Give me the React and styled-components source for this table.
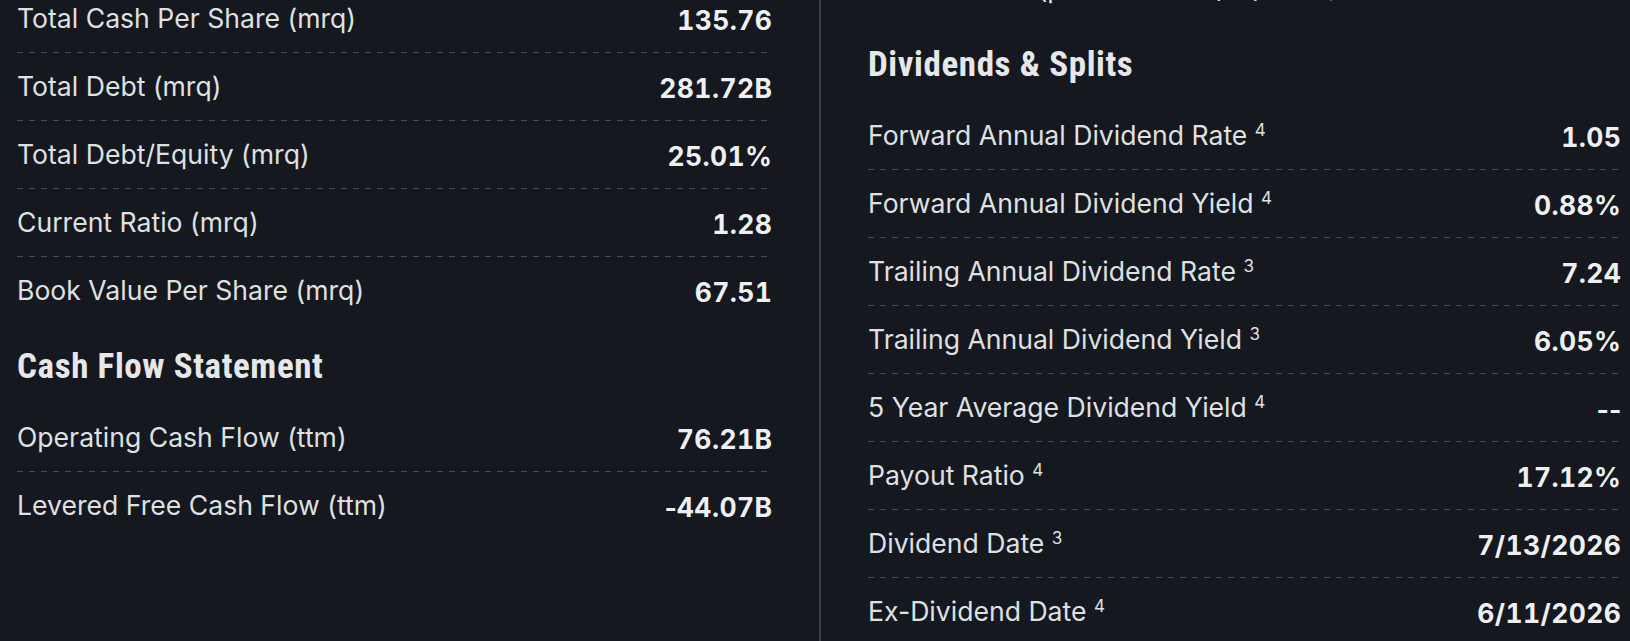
import React from 'react';
import styled, { createGlobalStyle } from 'styled-components';

const GlobalStyle = createGlobalStyle`
	html, body {
		margin: 0;
		padding: 0;
		background: #15181e;
	}
	body {
		font-family: Inter, 'Liberation Sans', sans-serif;
		color: #e4e5e7;
	}
`;

const BALANCE_ROWS = [
	{ label: 'Total Cash Per Share (mrq)', value: '135.76' },
	{ label: 'Total Debt (mrq)', value: '281.72B' },
	{ label: 'Total Debt/Equity (mrq)', value: '25.01%' },
	{ label: 'Current Ratio (mrq)', value: '1.28' },
	{ label: 'Book Value Per Share (mrq)', value: '67.51' }
];

const CASH_FLOW_ROWS = [
	{ label: 'Operating Cash Flow (ttm)', value: '76.21B' },
	{ label: 'Levered Free Cash Flow (ttm)', value: '-44.07B' }
];

const SHARE_ROWS = [{ label: 'Shares Short (prior month 5/15/2026)', note: 4, value: '1.56B' }];

const DIVIDEND_ROWS = [
	{ label: 'Forward Annual Dividend Rate', note: 4, value: '1.05' },
	{ label: 'Forward Annual Dividend Yield', note: 4, value: '0.88%' },
	{ label: 'Trailing Annual Dividend Rate', note: 3, value: '7.24' },
	{ label: 'Trailing Annual Dividend Yield', note: 3, value: '6.05%' },
	{ label: '5 Year Average Dividend Yield', note: 4, value: '--' },
	{ label: 'Payout Ratio', note: 4, value: '17.12%' },
	{ label: 'Dividend Date', note: 3, value: '7/13/2026' },
	{ label: 'Ex-Dividend Date', note: 4, value: '6/11/2026' },
	{ label: 'Last Split Factor', note: 2, value: '4:1' },
	{ label: 'Last Split Date', note: 3, value: '8/31/2020' }
];

// hyphens keep their normal width, digits are tabular
const formatValue = (value) =>
	value.split(/(-+)/).map((part, i) => (part.startsWith('-') ? <Dash key={i}>{part}</Dash> : part));

const StatRows = ({ rows }) => (
	<Table>
		{rows.map((row) => (
			<Row key={row.label}>
				<Label>
					{row.label}
					{row.note ? (
						<>
							{' '}
							<Note>{row.note}</Note>
						</>
					) : null}
				</Label>
				<Value>{formatValue(row.value)}</Value>
			</Row>
		))}
	</Table>
);

const App = () => {
	return (
		<>
			<GlobalStyle />
			<Page>
				<Column>
					{/* page is scrolled: the top of this column is above the fold */}
					<Scrolled $shift={-15}>
						<StatRows rows={BALANCE_ROWS} />
						<Heading>Cash Flow Statement</Heading>
						<StatRows rows={CASH_FLOW_ROWS} />
					</Scrolled>
				</Column>
				<Column $divider>
					<Scrolled $shift={-45}>
						<StatRows rows={SHARE_ROWS} />
						<Heading>Dividends &amp; Splits</Heading>
						<StatRows rows={DIVIDEND_ROWS} />
					</Scrolled>
				</Column>
			</Page>
		</>
	);
};

const Page = styled.div`
	display: grid;
	grid-template-columns: 755px 1fr;
	column-gap: 47px;
	height: 100vh;
	padding: 0 9px 0 17px;
	box-sizing: border-box;
	overflow: hidden;
`;

const Column = styled.section`
	min-width: 0;
	border-left: ${(p) => (p.$divider ? '2px solid #3a3d43' : 'none')};
	padding-left: ${(p) => (p.$divider ? '47px' : '0')};
`;

const Scrolled = styled.div`
	margin-top: ${(p) => p.$shift}px;
`;

const Heading = styled.h3`
	margin: 0;
	height: 79px;
	box-sizing: border-box;
	padding-top: 22px;
	font-family: 'Liberation Sans Narrow', 'Roboto Condensed', 'DejaVu Sans Condensed', sans-serif;
	font-weight: 700;
	font-size: 35px;
	line-height: 40px;
	color: #e6e7e9;
	letter-spacing: 0.6px;
`;

const Table = styled.div`
	display: flex;
	flex-direction: column;
`;

const Row = styled.div`
	display: flex;
	justify-content: space-between;
	align-items: flex-start;
	height: 68px;
	box-sizing: border-box;
	padding-top: 16px;
	background: linear-gradient(to right, #484b51 50%, transparent 50%) left bottom / 12px 1px repeat-x;

	&:last-child {
		background: none;
	}
`;

const Label = styled.span`
	font-size: 26.6px;
	line-height: 34px;
	font-weight: 400;
	color: #dfe0e2;
	white-space: nowrap;
`;

const Note = styled.sup`
	font-size: 17px;
	line-height: 0;
	vertical-align: 9px;
`;

const Value = styled.span`
	padding-top: 2px;
	margin-right: -0.4px;
	font-size: 26.5px;
	line-height: 34px;
	font-weight: 700;
	font-variant-numeric: tabular-nums;
	letter-spacing: 0.4px;
	color: #eeeff1;
	white-space: nowrap;
`;

const Dash = styled.span`
	font-variant-numeric: normal;
	font-feature-settings: 'tnum' 0, 'calt' 0;
	letter-spacing: 0;
`;

export default App;
